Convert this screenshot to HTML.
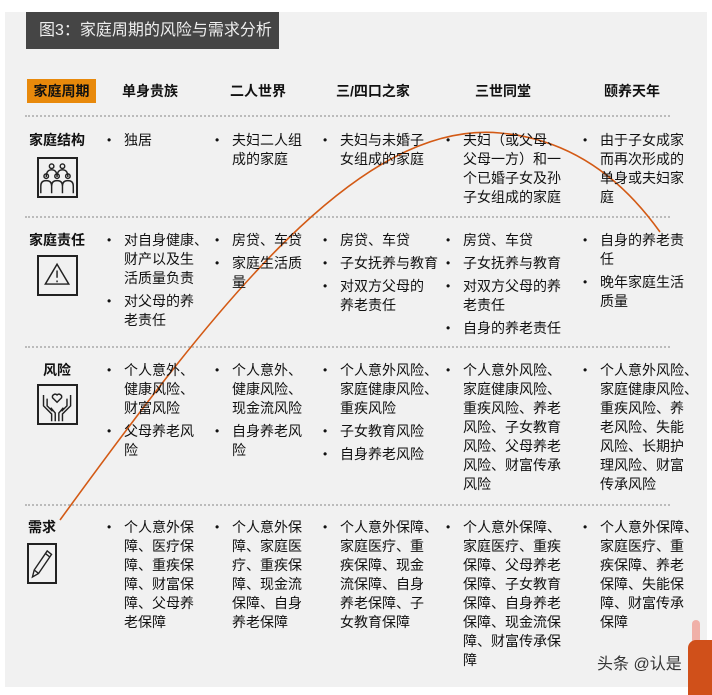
<!DOCTYPE html>
<html><head><meta charset="utf-8"><style>
*{margin:0;padding:0;box-sizing:border-box}
body{width:712px;height:689px;background:#fff;position:relative;overflow:hidden;font-family:"Liberation Sans","Noto Sans CJK SC",sans-serif;color:#111}
#panel{position:absolute;left:5px;top:12px;width:702px;height:675px;background:#f1f1f1}
#title{position:absolute;left:26px;top:12px;width:253px;height:37px;background:#454545;color:#eee;font-size:16px;line-height:37px;padding-left:13px}
.h{position:absolute;top:81px;font-size:14px;font-weight:bold;line-height:20px}
#tag{position:absolute;left:27px;top:79px;width:69px;height:24px;background:#e8890b;font-size:14px;font-weight:bold;line-height:24px;text-align:center}
.dl{position:absolute;left:25px;width:645px;border-top:2px dotted #bbb}
.rl{position:absolute;font-size:14px;font-weight:bold;line-height:20px;text-align:center;width:60px}
.c{position:absolute;font-size:14px;line-height:19px;white-space:nowrap}
.c p{position:relative;padding-left:17px;margin-bottom:4px}
.c p:before{content:"•";position:absolute;left:0;top:0;font-size:12px}
.ic{position:absolute;border:2px solid #222;background:#f1f1f1}
</style></head><body>
<div id="panel"></div>
<div id="title">图3：家庭周期的风险与需求分析</div>
<div id="tag">家庭周期</div>
<div class="h" style="left:122px">单身贵族</div>
<div class="h" style="left:230px">二人世界</div>
<div class="h" style="left:336px">三/四口之家</div>
<div class="h" style="left:475px">三世同堂</div>
<div class="h" style="left:604px">颐养天年</div>
<div class="dl" style="top:115px"></div>
<div class="dl" style="top:216px"></div>
<div class="dl" style="top:346px"></div>
<div class="dl" style="top:504px"></div>

<div class="rl" style="left:27px;top:130px">家庭结构</div>
<div class="rl" style="left:27px;top:230px">家庭责任</div>
<div class="rl" style="left:27px;top:360px">风险</div>
<div class="rl" style="left:12px;top:517px">需求</div>

<svg class="ic" style="left:37px;top:157px" width="41" height="41" viewBox="0 0 41 41" fill="none" stroke="#222" stroke-width="1.6">
<circle cx="14" cy="8" r="2.5"/><circle cx="26" cy="8" r="2.5"/>
<path d="M8 20 q0-8 6-8 q6 0 6 8 M20 20 q0-8 6-8 q6 0 6 8"/>
<circle cx="8" cy="19" r="2.5"/><circle cx="20" cy="19" r="2.5"/><circle cx="32" cy="19" r="2.5"/>
<path d="M2 38 v-8 q0-6 6-6 q6 0 6 6 v8 M14 38 v-8 q0-6 6-6 q6 0 6 6 v8 M26 38 v-8 q0-6 6-6 q6 0 6 6 v8"/>
</svg>
<svg class="ic" style="left:37px;top:255px" width="41" height="41" viewBox="0 0 41 41" fill="none" stroke="#222" stroke-width="1.6">
<path d="M20 8 L33 30 H7 Z"/><path d="M20 15 v8 M20 26 v2"/>
</svg>
<svg class="ic" style="left:37px;top:384px" width="41" height="41" viewBox="0 0 41 41" fill="none" stroke="#222" stroke-width="1.6">
<path d="M20 18 l-5-5 a3 3 0 0 1 5-3 a3 3 0 0 1 5 3 z"/>
<path d="M5 10 v12 l9 9 v8 M9 14 v8 l6 6 M18 39 v-9 l-5-6"/>
<path d="M35 10 v12 l-9 9 v8 M31 14 v8 l-6 6 M22 39 v-9 l5-6"/>
</svg>
<svg class="ic" style="left:27px;top:543px" width="30" height="41" viewBox="0 0 30 41" fill="none" stroke="#222" stroke-width="1.6">
<path d="M4 36 l2-8 L21 6 l5 4 L11 32 Z M6 28 l5 4 M19 9 l5 4"/>
</svg>

<svg style="position:absolute;left:0;top:0" width="712" height="689"><path d="M60 520 C 220 300 360 120 500 133 C 580 140 630 190 660 232" fill="none" stroke="#d35a15" stroke-width="1.6"/></svg>

<!-- row 1 -->
<div class="c" style="left:107px;top:131px"><p>独居</p></div>
<div class="c" style="left:215px;top:131px"><p>夫妇二人组<br>成的家庭</p></div>
<div class="c" style="left:323px;top:131px"><p>夫妇与未婚子<br>女组成的家庭</p></div>
<div class="c" style="left:446px;top:131px"><p>夫妇（或父母、<br>父母一方）和一<br>个已婚子女及孙<br>子女组成的家庭</p></div>
<div class="c" style="left:583px;top:131px"><p>由于子女成家<br>而再次形成的<br>单身或夫妇家<br>庭</p></div>
<!-- row 2 -->
<div class="c" style="left:107px;top:231px"><p>对自身健康、<br>财产以及生<br>活质量负责</p><p>对父母的养<br>老责任</p></div>
<div class="c" style="left:215px;top:231px"><p>房贷、车贷</p><p>家庭生活质<br>量</p></div>
<div class="c" style="left:323px;top:231px"><p>房贷、车贷</p><p>子女抚养与教育</p><p>对双方父母的<br>养老责任</p></div>
<div class="c" style="left:446px;top:231px"><p>房贷、车贷</p><p>子女抚养与教育</p><p>对双方父母的养<br>老责任</p><p>自身的养老责任</p></div>
<div class="c" style="left:583px;top:231px"><p>自身的养老责<br>任</p><p>晚年家庭生活<br>质量</p></div>
<!-- row 3 -->
<div class="c" style="left:107px;top:361px"><p>个人意外、<br>健康风险、<br>财富风险</p><p>父母养老风<br>险</p></div>
<div class="c" style="left:215px;top:361px"><p>个人意外、<br>健康风险、<br>现金流风险</p><p>自身养老风<br>险</p></div>
<div class="c" style="left:323px;top:361px"><p>个人意外风险、<br>家庭健康风险、<br>重疾风险</p><p>子女教育风险</p><p>自身养老风险</p></div>
<div class="c" style="left:446px;top:361px"><p>个人意外风险、<br>家庭健康风险、<br>重疾风险、养老<br>风险、子女教育<br>风险、父母养老<br>风险、财富传承<br>风险</p></div>
<div class="c" style="left:583px;top:361px"><p>个人意外风险、<br>家庭健康风险、<br>重疾风险、养<br>老风险、失能<br>风险、长期护<br>理风险、财富<br>传承风险</p></div>
<!-- row 4 -->
<div class="c" style="left:107px;top:518px"><p>个人意外保<br>障、医疗保<br>障、重疾保<br>障、财富保<br>障、父母养<br>老保障</p></div>
<div class="c" style="left:215px;top:518px"><p>个人意外保<br>障、家庭医<br>疗、重疾保<br>障、现金流<br>保障、自身<br>养老保障</p></div>
<div class="c" style="left:323px;top:518px"><p>个人意外保障、<br>家庭医疗、重<br>疾保障、现金<br>流保障、自身<br>养老保障、子<br>女教育保障</p></div>
<div class="c" style="left:446px;top:518px"><p>个人意外保障、<br>家庭医疗、重疾<br>保障、父母养老<br>保障、子女教育<br>保障、自身养老<br>保障、现金流保<br>障、财富传承保<br>障</p></div>
<div class="c" style="left:583px;top:518px"><p>个人意外保障、<br>家庭医疗、重<br>疾保障、养老<br>保障、失能保<br>障、财富传承<br>保障</p></div>

<div style="position:absolute;left:597px;top:650px;font-size:16px;color:#333">头条 @认是</div>
<div style="position:absolute;left:692px;top:620px;width:8px;height:30px;background:#f0b0a8;border-radius:4px"></div>
<div style="position:absolute;left:688px;top:640px;width:30px;height:55px;background:#d0501a;border-radius:8px 0 0 0"></div>
</body></html>
